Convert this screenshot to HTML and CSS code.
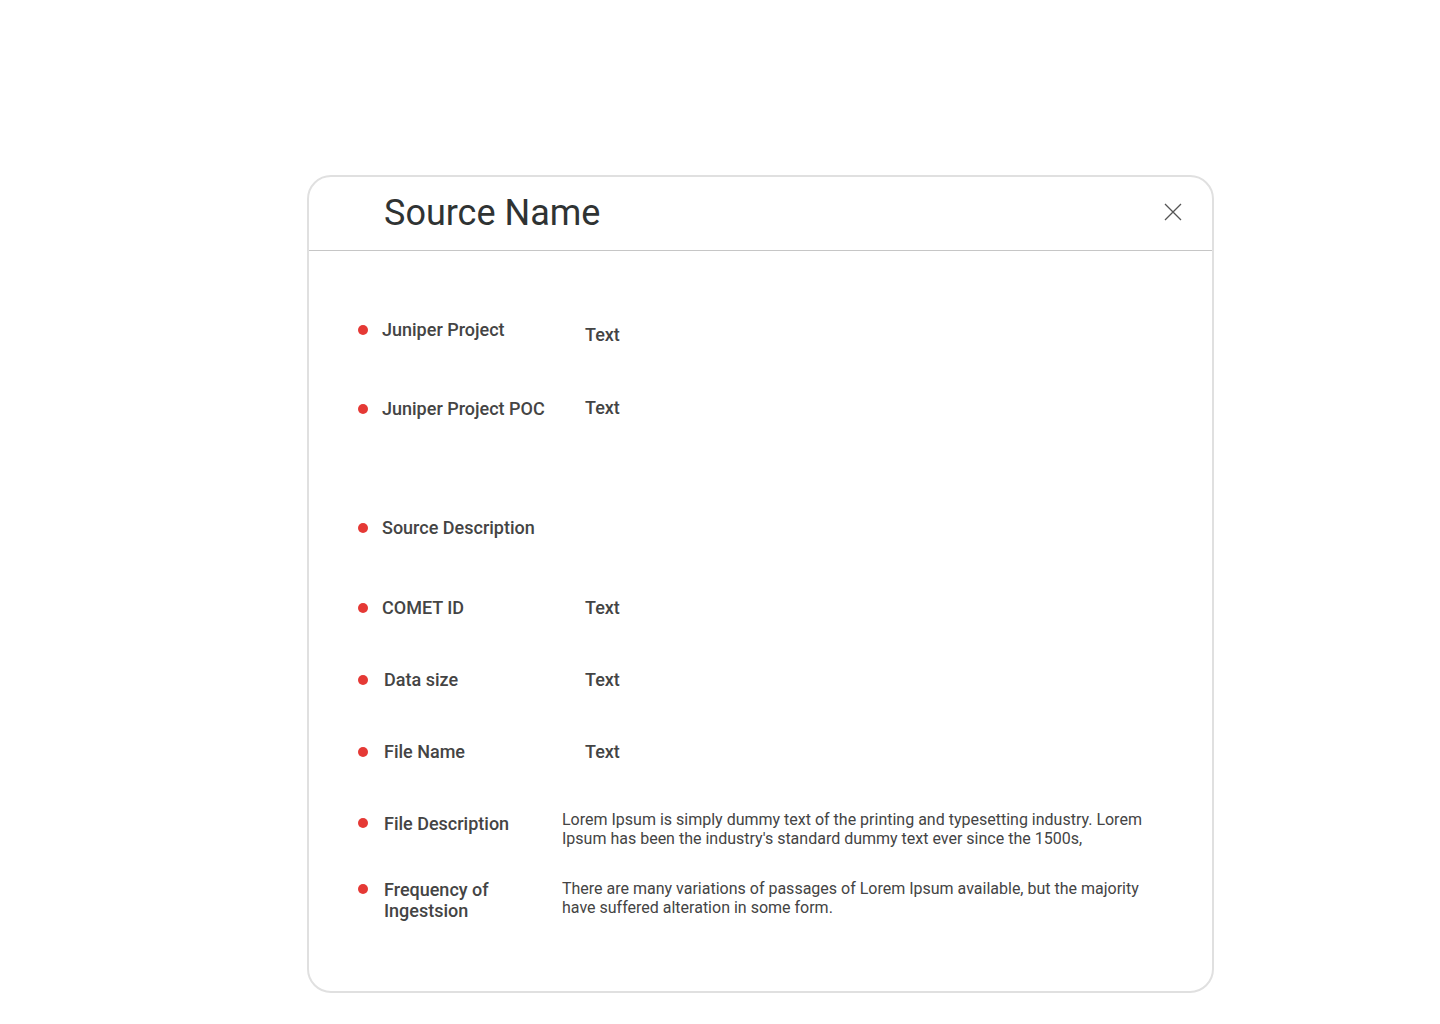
FILE: index.html
```html
<!DOCTYPE html>
<html lang="en">
<head>
<meta charset="utf-8">
<title>Source Name</title>
<link rel="stylesheet" href="styles.css">
</head>
<body>
<div class="card">
  <div class="card-header">
    <h1 class="title">Source Name</h1>
    <button class="close" aria-label="Close">
      <svg width="18" height="18" viewBox="0 0 18 18"><path d="M1 1 L17 17 M17 1 L1 17" stroke="#555" stroke-width="1.3" fill="none"/></svg>
    </button>
  </div>
  <div class="card-body">
    <div class="row r1"><span class="dot"></span><span class="label">Juniper Project</span><span class="value v1">Text</span></div>
    <div class="row r2"><span class="dot"></span><span class="label">Juniper Project POC</span><span class="value v2">Text</span></div>
    <div class="row r3"><span class="dot"></span><span class="label">Source Description</span></div>
    <div class="row r4"><span class="dot"></span><span class="label">COMET ID</span><span class="value">Text</span></div>
    <div class="row r5 shift"><span class="dot"></span><span class="label">Data size</span><span class="value">Text</span></div>
    <div class="row r6 shift"><span class="dot"></span><span class="label">File Name</span><span class="value">Text</span></div>
    <div class="row r7 shift long"><span class="dot"></span><span class="label">File Description</span><span class="value para p7">Lorem Ipsum is simply dummy text of the printing and typesetting industry. Lorem Ipsum has been the industry's standard dummy text ever since the 1500s,</span></div>
    <div class="row r8 shift long"><span class="dot"></span><span class="label">Frequency of<br>Ingestsion</span><span class="value para">There are many variations of passages of Lorem Ipsum available, but the majority have suffered alteration in some form.</span></div>
  </div>
</div>
</body>
</html>
```
FILE: styles.css
```css
* { box-sizing: border-box; }
html, body { margin: 0; padding: 0; background: #fff; }
body { font-family: Roboto, "Noto Sans", Arial, sans-serif; color: #444; }

.card {
  margin: 175px 0 0 307px;
  width: 907px;
  height: 818px;
  border: 2px solid #e0e0e0;
  border-radius: 24px;
  background: #fff;
}

.card-header {
  height: 74px;
  border-bottom: 1px solid #c6c6c6;
  display: flex;
  align-items: center;
  justify-content: space-between;
  padding: 0 30px 0 75px;
}

.title {
  margin: 0;
  font-size: 36px;
  font-weight: 400;
  color: #2f3333;
  margin-top: -2px;
}

.close {
  border: 0;
  background: none;
  padding: 0;
  width: 18px;
  height: 18px;
  cursor: pointer;
  margin-top: -3px;
}
.close svg { display: block; }

.card-body {
  padding: 69px 60px 0 49px;
}

.row {
  display: flex;
  align-items: flex-start;
  line-height: 20px;
}
.r2 { margin-top: 59px; }
.r3 { margin-top: 99px; }
.r4 { margin-top: 60px; }
.r5 { margin-top: 52px; }
.r6 { margin-top: 52px; }
.r7 { margin-top: 51px; }
.r8 { margin-top: 31px; }

.dot {
  flex: none;
  width: 10px;
  height: 10px;
  border-radius: 50%;
  background: #e53935;
  margin-top: 5px;
}

.label {
  flex: none;
  width: 203px;
  margin-left: 14px;
  font-size: 18px;
  font-weight: 500;
  color: #444;
}
.shift .label { margin-left: 16px; width: 201px; }
.long .label { width: 178px; line-height: 21px; }

.value {
  font-size: 18px;
  font-weight: 500;
  color: #444;
}
.v1 { margin-top: 5px; margin-bottom: -5px; }
.v2 { margin-top: -1px; margin-bottom: 1px; }

.para {
  font-size: 16px;
  font-weight: 400;
  line-height: 19px;
  color: #444;
  width: 592px;
  margin-top: 0;
}
.p7 { margin-top: -3px; }
```
